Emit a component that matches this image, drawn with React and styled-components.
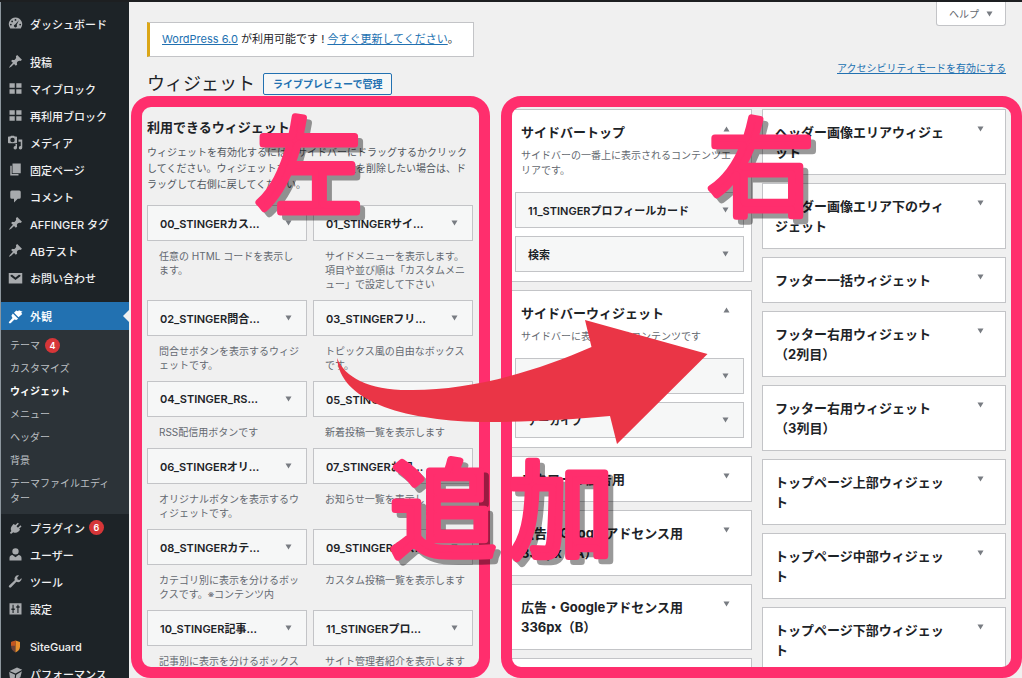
import React from 'react'
import styled, { createGlobalStyle } from 'styled-components'

const GlobalStyle = createGlobalStyle`
    * {
        box-sizing: border-box;
    }
    body {
        margin: 0;
        background: #f0f0f0;
        color: #1d2327;
        font-family: Inter, "Noto Sans CJK JP", sans-serif;
        font-size: 10px;
    }
    h1, h2, h3, p, ul {
        margin: 0;
        padding: 0;
    }
    a {
        color: #2271b1;
    }
`
const Page = styled.div`
    position: relative;
    display: flex;
    height: 100vh;
    overflow: hidden;
    border-top: 2px solid #1d1f21;
`
const Sidebar = styled.nav`
    flex: 0 0 129px;
    padding-top: 8px;
    background: #1d2327;
    border-left: 1px solid #8d979e;
`
const MenuGroup = styled.ul`
    list-style: none;
    margin-bottom: 11px;
`
const MenuLink = styled.a`
    position: relative;
    display: flex;
    align-items: center;
    gap: 7px;
    height: ${props => props.$current ? '28px' : '27px'};
    padding-left: 7px;
    background: ${props => props.$current ? '#2271b1' : 'transparent'};
    color: ${props => props.$current ? '#fff' : '#f0f0f1'};
    font-size: 11px;
    font-weight: 500;
    text-decoration: none;
    white-space: nowrap;
    svg {
        flex: none;
        width: 15px;
        height: 15px;
        color: ${props => props.$current ? '#fff' : '#a7aaad'};
    }
`
const CurrentNotch = styled.span`
    position: absolute;
    right: 0;
    top: 8px;
    border: 6px solid transparent;
    border-left: 0;
    border-right-color: #f0f0f0;
`
const Submenu = styled.ul`
    list-style: none;
    padding: 4px 0;
    background: #2c3338;
`
const SubLink = styled.a`
    display: flex;
    align-items: center;
    gap: 5px;
    padding: 4px 14px 4px 9px;
    color: ${props => props.$current ? '#fff' : '#bcc0c4'};
    font-weight: ${props => props.$current ? 700 : 400};
    line-height: 15px;
    text-decoration: none;
    white-space: pre-line;
`
const Badge = styled.span`
    width: 15px;
    height: 15px;
    margin-left: ${props => props.$tight ? '-3px' : '0'};
    border-radius: 50%;
    background: #d63638;
    color: #fff;
    font-size: 9px;
    font-weight: 600;
    line-height: 15px;
    text-align: center;
`
const Main = styled.main`
    flex: 1;
    display: flex;
    flex-direction: column;
    min-width: 0;
    padding: 0 16px 0 18px;
`
const TopRow = styled.div`
    display: flex;
    justify-content: space-between;
    align-items: flex-start;
    height: 55px;
`
const Notice = styled.div`
    margin-top: 20px;
    padding: 0 14px 0 12px;
    border: 1px solid #c3c4c7;
    border-left: 3px solid #dba617;
    background: #fff;
    font-size: 11px;
    line-height: 33px;
    white-space: nowrap;
`
const HelpButton = styled.button`
    display: flex;
    align-items: center;
    gap: 7px;
    height: 24px;
    padding: 0 12px;
    border: 1px solid #c3c4c7;
    border-top: 0;
    border-radius: 0 0 3px 3px;
    background: #fff;
    color: #646970;
    font: inherit;
    line-height: 20px;
`
const TitleRow = styled.header`
    display: flex;
    align-items: center;
    height: 51px;
    padding-top: 2px;
`
const Title = styled.h1`
    margin-right: 8px;
    font-size: 18px;
    font-weight: 400;
    line-height: 24px;
`
const PreviewLink = styled.a`
    padding: 0 9px;
    border: 1px solid #2271b1;
    border-radius: 2px;
    background: #f6f7f7;
    font-weight: 600;
    line-height: 20px;
    text-decoration: none;
`
const AccessLink = styled.a`
    align-self: flex-start;
    margin-left: auto;
    line-height: 18px;
`
const Panels = styled.div`
    flex: 1;
    display: grid;
    grid-template-columns: 326fr 498fr;
    gap: 35px;
    min-height: 0;
`
const Panel = styled.section`
    position: relative;
    min-height: 0;
`
const Frame = styled.div`
    position: absolute;
    top: -12px;
    bottom: 0;
    left: ${props => props.$left};
    right: ${props => props.$right};
    border: 11px solid #ff2e6d;
    border-radius: 20px;
    pointer-events: none;
`
const Clip = styled.div`
    position: absolute;
    inset: 0 0 8px;
    overflow: hidden;
`
const PanelTitle = styled.h2`
    margin-top: 9px;
    font-size: 13px;
    line-height: 20px;
`
const Intro = styled.p`
    margin: 7px 0 13px;
    color: #50575e;
    line-height: 16px;
    white-space: pre;
`
const WidgetGrid = styled.div`
    display: grid;
    grid-template-columns: 1fr 1fr;
    column-gap: 6px;
`
const WidgetBar = styled.button`
    display: flex;
    align-items: center;
    justify-content: space-between;
    width: 100%;
    height: 36px;
    padding: 0 14px 0 12px;
    border: 1px solid #c3c4c7;
    background: #f6f7f7;
    color: #1d2327;
    font: inherit;
    font-size: 11px;
    font-weight: 600;
    white-space: nowrap;
`
const WidgetText = styled.p`
    margin: 8px 0 9px;
    padding-left: 12px;
    color: #646970;
    line-height: 14px;
    white-space: pre;
`
const Areas = styled.div`
    display: grid;
    grid-template-columns: 1fr 1fr;
    column-gap: 10px;
    padding-top: 1px;
`
const AreaColumn = styled.div`
    display: flex;
    flex-direction: column;
    gap: 8px;
`
const AreaBox = styled.article`
    border: 1px solid #c3c4c7;
    background: #fff;
`
const AreaHead = styled.div`
    display: flex;
    justify-content: space-between;
    padding: ${props => props.$open ? '12px 21px 6px 12px' : '12px 21px 12px 12px'};
    svg {
        margin-top: 4px;
    }
`
const AreaTitle = styled.h3`
    font-size: 13px;
    line-height: 20px;
    white-space: pre;
`
const AreaText = styled.p`
    padding-left: 12px;
    color: #646970;
    line-height: 15px;
    white-space: pre;
`
const AreaWidgets = styled.div`
    display: flex;
    flex-direction: column;
    gap: 8px;
    padding: 14px 7px 9px 6px;
`
const Toggle = styled.svg`
    flex: none;
    width: 7px;
    height: 6px;
    fill: #787c82;
`
const Notes = styled.svg`
    position: absolute;
    top: -2px;
    left: 0;
    width: 1022px;
    height: 678px;
    pointer-events: none;
`
const NoteText = styled.text`
    fill: #ff2e6d;
    stroke: #ff2e6d;
    stroke-width: 7px;
    stroke-linejoin: round;
    filter: drop-shadow(5px 5px 0 rgba(0, 0, 0, 0.4));
    font-family: "Noto Sans CJK JP", sans-serif;
    font-size: 106px;
    font-weight: 400;
`

const Icon = ({ children }) => (
    <svg viewBox="0 0 20 20" fill="currentColor" aria-hidden="true">{children}</svg>
)
const GaugeIcon = () => (
    <Icon>
        <path fillRule="evenodd" d="M10 2a9 9 0 0 0-7 14.500h14A9 9 0 0 0 10 2zm0 2a1.200 1.200 0 1 1 0 2.400 1.200 1.200 0 0 1 0-2.400zM5.500 6a1.200 1.200 0 1 1 0 2.400 1.200 1.200 0 0 1 0-2.400zM3.800 10.200a1.200 1.200 0 1 1 0 2.400 1.200 1.200 0 0 1 0-2.400zm12.400 0a1.200 1.200 0 1 1 0 2.400 1.200 1.200 0 0 1 0-2.400zM14.500 5.500l-3 6.500a2 2 0 1 1-2-.8z" />
    </Icon>
)
const PinIcon = () => (
    <Icon>
        <path d="M10.440 3.020l1.820-1.820 6.360 6.350-1.830 1.820c-1.050-.68-2.480-.57-3.410.36l-.75.750c-.92.930-1.040 2.350-.35 3.410l-1.830 1.820-2.410-2.410-2.800 2.790c-.42.420-3.380 2.710-3.800 2.290s1.860-3.390 2.280-3.810l2.790-2.790L4.100 9.360l1.830-1.820c1.050.69 2.480.57 3.400-.36l.75-.750c.93-.92 1.050-2.350.36-3.410z" />
    </Icon>
)
const BlocksIcon = () => (
    <Icon><path d="M2 3h7v6H2zM11 3h7v6h-7zM2 11h7v6H2zM11 11h7v6h-7z" /></Icon>
)
const MediaIcon = () => (
    <Icon>
        <path fillRule="evenodd" d="M3 2l1-1h4l1 1h2q1 0 1 1v7q0 1-1 1H1q-1 0-1-1V3q0-1 1-1zm3 1.500a3 3 0 1 0 0 6 3 3 0 0 0 0-6z" />
        <path d="M14 6h5v11a2.300 2.300 0 1 1-2-2.200V9h-3zM10 12h2v5a2.300 2.300 0 1 1-2-2.200z" />
    </Icon>
)
const PagesIcon = () => (
    <Icon><path d="M6 2h11v13H6zM3 5h2v11h9v2H3z" /></Icon>
)
const CommentIcon = () => (
    <Icon><path d="M5 2h10q2 0 2 2v7q0 2-2 2h-2l-5 5v-5H5q-2 0-2-2V4q0-2 2-2z" /></Icon>
)
const MailIcon = () => (
    <Icon><path fillRule="evenodd" d="M1 4h18v14H1zM3.500 6.500v1.700l6.500 5 6.500-5V6.500l-2-.3L10 10 5.500 6.200z" /></Icon>
)
const BrushIcon = () => (
    <Icon>
        <path d="M14.500 1.500l5 2-2 1 1.500 2-5 4.500-6-6 3-3 2.500 1zM6.500 6l7 7-2.500 1.500-2.500-.5-5 5q-2 .5-2.500-1.500L6 12l-1.500-3z" />
    </Icon>
)
const PlugIcon = () => (
    <Icon>
        <path d="M13 3.500l1.500 1.500-3.200 3.200 2 2L16.500 7 18 8.500l-3.200 3.200 1.400 1.400-2.200 2.200q-3.500 3-7 1L4 18.500 2.500 17l2-2.500q-2-3.500 1-7L7.300 5.300l2.500 1.400z" />
    </Icon>
)
const UserIcon = () => (
    <Icon><path d="M10 1.500a4 4 0 0 1 0 8.500 4 4 0 0 1 0-8.500zM6 10.500l4 3 4-3q4 .5 4 4V18H2v-3.500q0-3.500 4-4z" /></Icon>
)
const WrenchIcon = () => (
    <Icon><path d="M16.700 9.400a4.500 4.500 0 0 1-5.500 1l-7 7.400a1.800 1.800 0 0 1-2.600-2.600l7.400-7a4.600 4.600 0 0 1 5.800-6.100l-2.600 2.700.6 2.500 2.500.6 2.700-2.600q.6 2.300-1.300 4.100z" /></Icon>
)
const SettingsIcon = () => (
    <Icon>
        <path fillRule="evenodd" d="M2 3h16v15H2zm4 2v5H4.500v2H6v4h1.500v-4H9v-2H7.500V5zm6.500 0v2H11v2h1.500v7H14V9h1.500V7H14V5z" />
    </Icon>
)
const ShieldIcon = () => (
    <Icon>
        <path d="M4 4l6-2v16q-6-3-6-9z" fill="#6d4238" />
        <path d="M10 2l6 2v6q0 5-6 8z" fill="#e8902e" />
        <path d="M4 4l6-2v7H4z" fill="#c4551f" />
    </Icon>
)
const CubeIcon = () => (
    <Icon>
        <path d="M2 6.500L12 2l7 3-9 5zM1.500 8l8 3.500-1 7.500-6-3.500zM11 11.500L18.500 7l-2 8L10 19z" />
    </Icon>
)

const menuMain = [
    [PinIcon, '投稿'],
    [BlocksIcon, 'マイブロック'],
    [BlocksIcon, '再利用ブロック'],
    [MediaIcon, 'メディア'],
    [PagesIcon, '固定ページ'],
    [CommentIcon, 'コメント'],
    [PinIcon, 'AFFINGER タグ'],
    [PinIcon, 'ABテスト'],
    [MailIcon, 'お問い合わせ'],
]
const menuTools = [
    [PlugIcon, 'プラグイン', 6],
    [UserIcon, 'ユーザー'],
    [WrenchIcon, 'ツール'],
    [SettingsIcon, '設定'],
]
const menuExtra = [
    [ShieldIcon, 'SiteGuard'],
    [CubeIcon, 'パフォーマンス'],
]
const submenu = [
    ['テーマ', 4],
    ['カスタマイズ'],
    ['ウィジェット'],
    ['メニュー'],
    ['ヘッダー'],
    ['背景'],
    ['テーマファイルエディ\nター'],
]
const widgets = [
    ['00_STINGERカス...', '任意の HTML コードを表示し\nます。'],
    ['01_STINGERサイ...', 'サイドメニューを表示します。\n項目や並び順は「カスタムメニ\nュー」で設定して下さい'],
    ['02_STINGER問合...', '問合せボタンを表示するウィジ\nェットです。'],
    ['03_STINGERフリ...', 'トピックス風の自由なボックス\nです。'],
    ['04_STINGER_RS...', 'RSS配信用ボタンです'],
    ['05_STINGER新着...', '新着投稿一覧を表示します'],
    ['06_STINGERオリ...', 'オリジナルボタンを表示するウ\nィジェットです。'],
    ['07_STINGERお知...', 'お知らせ一覧を表示します'],
    ['08_STINGERカテ...', 'カテゴリ別に表示を分けるボッ\nクスです。※コンテンツ内'],
    ['09_STINGERカス...', 'カスタム投稿一覧を表示します'],
    ['10_STINGER記事...', '記事別に表示を分けるボックス'],
    ['11_STINGERプロ...', 'サイト管理者紹介を表示します'],
]
const areasLeft = [
    {
        title: 'サイドバートップ',
        text: 'サイドバーの一番上に表示されるコンテンツエ\nリアです。',
        items: ['11_STINGERプロフィールカード', '検索'],
    },
    {
        title: 'サイドバーウィジェット',
        text: 'サイドバーに表示されるコンテンツです',
        items: ['カテゴリー', 'アーカイブ'],
    },
    { title: 'スクロール広告用' },
    { title: '広告・Googleアドセンス用\n336px（A）' },
    { title: '広告・Googleアドセンス用\n336px（B）' },
    { title: '' },
]
const areasRight = [
    { title: 'ヘッダー画像エリアウィジェ\nット' },
    { title: 'ヘッダー画像エリア下のウィ\nジェット' },
    { title: 'フッター一括ウィジェット' },
    { title: 'フッター右用ウィジェット\n（2列目）' },
    { title: 'フッター右用ウィジェット\n（3列目）' },
    { title: 'トップページ上部ウィジェッ\nト' },
    { title: 'トップページ中部ウィジェッ\nト' },
    { title: 'トップページ下部ウィジェッ\nト' },
]
const notes = [
    ['左', 309, 206],
    ['右', 761, 207],
    ['追', 443, 549],
    ['加', 561, 549],
]

const Arrow = ({ up }) => (
    <Toggle viewBox="0 0 7 6" aria-hidden="true">
        <path d={up ? 'M.5 5.500h6L3.500.5z' : 'M.5.5h6L3.500 5.500z'} />
    </Toggle>
)

const MenuItems = ({ items }) => (
    <>
        {items.map(([ItemIcon, label, count]) => (
            <li key={label}>
                <MenuLink href="#">
                    <ItemIcon />
                    {label}
                    {count && <Badge $tight>{count}</Badge>}
                </MenuLink>
            </li>
        ))}
    </>
)

const Area = ({ title, text, items }) => (
    <AreaBox>
        <AreaHead $open={!!items}>
            <AreaTitle>{title}</AreaTitle>
            <Arrow up={!!items} />
        </AreaHead>
        {text && <AreaText>{text}</AreaText>}
        {items && (
            <AreaWidgets>
                {items.map(item => (
                    <WidgetBar key={item}>{item}<Arrow /></WidgetBar>
                ))}
            </AreaWidgets>
        )}
    </AreaBox>
)

const App = () => {
    return (
        <Page>
            <GlobalStyle />
            <Sidebar>
                <MenuGroup>
                    <MenuItems items={[[GaugeIcon, 'ダッシュボード']]} />
                </MenuGroup>
                <MenuGroup>
                    <MenuItems items={menuMain} />
                </MenuGroup>
                <MenuGroup>
                    <li>
                        <MenuLink href="#" $current>
                            <BrushIcon />
                            外観
                            <CurrentNotch />
                        </MenuLink>
                        <Submenu>
                            {submenu.map(([label, count]) => (
                                <li key={label}>
                                    <SubLink href="#" $current={label === 'ウィジェット'}>
                                        {label}
                                        {count && <Badge>{count}</Badge>}
                                    </SubLink>
                                </li>
                            ))}
                        </Submenu>
                    </li>
                    <MenuItems items={menuTools} />
                </MenuGroup>
                <MenuGroup>
                    <MenuItems items={menuExtra} />
                </MenuGroup>
            </Sidebar>
            <Main>
                <TopRow>
                    <Notice>
                        <a href="#">WordPress 6.0</a> が利用可能です ! <a href="#">今すぐ更新してください</a>。
                    </Notice>
                    <HelpButton>ヘルプ<Arrow /></HelpButton>
                </TopRow>
                <TitleRow>
                    <Title>ウィジェット</Title>
                    <PreviewLink href="#">ライブプレビューで管理</PreviewLink>
                    <AccessLink href="#">アクセシビリティモードを有効にする</AccessLink>
                </TitleRow>
                <Panels>
                    <Panel>
                        <Clip>
                            <PanelTitle>利用できるウィジェット</PanelTitle>
                            <Intro>{'ウィジェットを有効化するには、サイドバーにドラッグするかクリック\nしてください。ウィジェットを無効化して設定を削除したい場合は、ド\nラッグして右側に戻してください。'}</Intro>
                            <WidgetGrid>
                                {widgets.map(([name, text]) => (
                                    <div key={name}>
                                        <WidgetBar>{name}<Arrow /></WidgetBar>
                                        <WidgetText>{text}</WidgetText>
                                    </div>
                                ))}
                            </WidgetGrid>
                        </Clip>
                        <Frame $left="-16px" $right="-17px" />
                    </Panel>
                    <Panel>
                        <Clip>
                            <Areas>
                                <AreaColumn>
                                    {areasLeft.map((area, i) => <Area key={i} {...area} />)}
                                </AreaColumn>
                                <AreaColumn>
                                    {areasRight.map((area, i) => <Area key={i} {...area} />)}
                                </AreaColumn>
                            </Areas>
                        </Clip>
                        <Frame $left="-7px" $right="-16px" />
                    </Panel>
                </Panels>
            </Main>
            <Notes viewBox="0 0 1022 678">
                <g textAnchor="middle">
                    {notes.map(([char, x, y]) => (
                        <NoteText key={char} x={x} y={y}>{char}</NoteText>
                    ))}
                </g>
                <path
                    fill="#ea3546"
                    d="M337 358C345 378 370 391 413 390 470 390 535 372 591.500 347L585 320 707.500 354 617 444 610 416C570 420 520 422 480 422 400 420 340 400 337 358z"
                />
            </Notes>
        </Page>
    )
}

export default App
